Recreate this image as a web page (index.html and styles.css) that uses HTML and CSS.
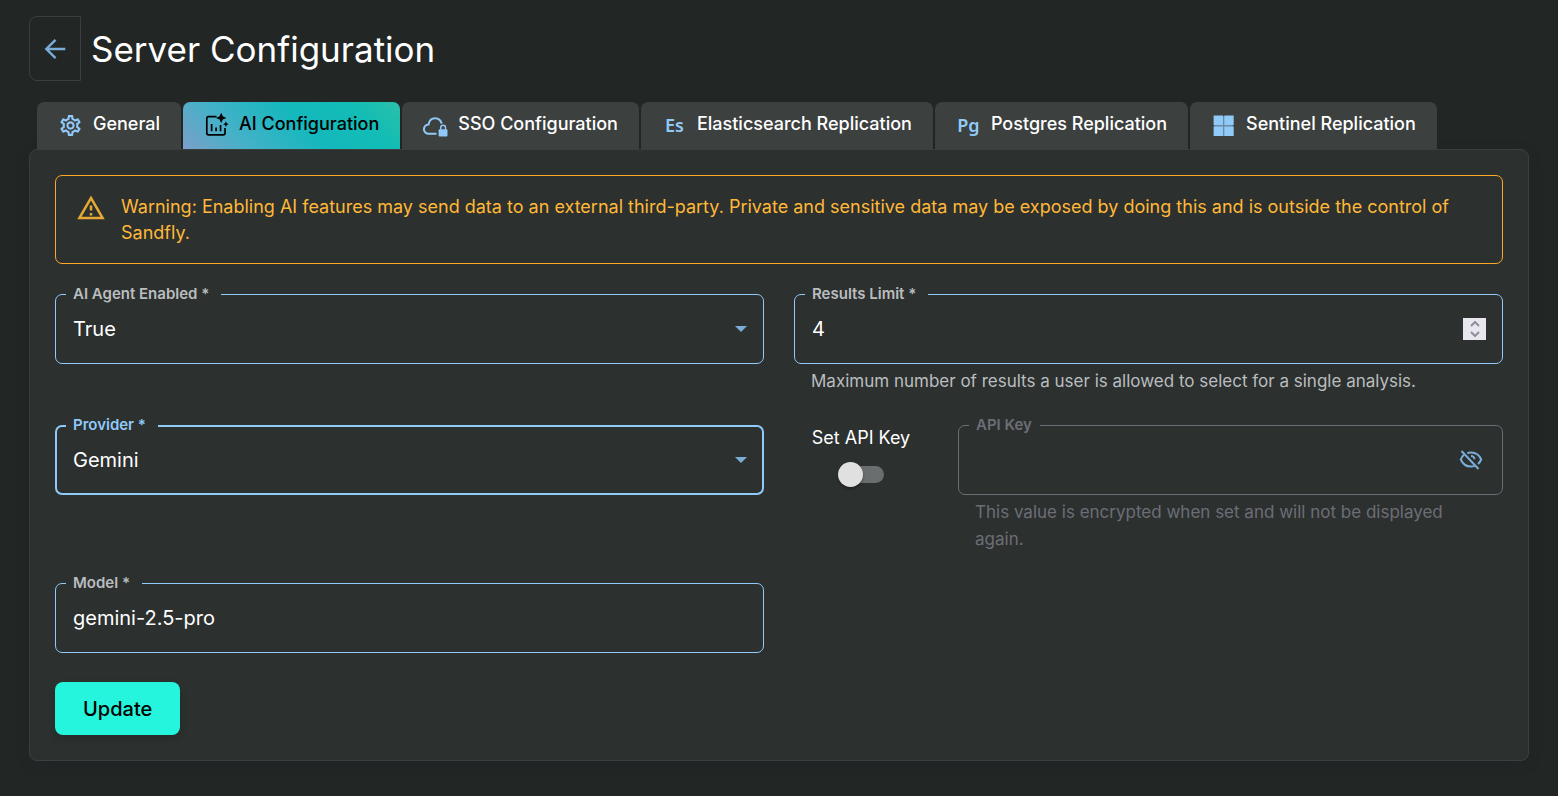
FILE: index.html
```html
<!DOCTYPE html>
<html lang="en">
<head>
<meta charset="utf-8">
<meta name="viewport" content="width=device-width, initial-scale=1">
<title>Server Configuration</title>
<link rel="stylesheet" href="styles.css">
</head>
<body>
<main class="page">
  <header class="page-header">
    <button class="back" type="button" aria-label="Back">
      <svg width="26" height="26" viewBox="0 0 24 24" fill="none" stroke="currentColor" stroke-width="2.2"><path d="M21.500 12H4.500M12.500 3.500L4 12l8.500 8.500"/></svg>
    </button>
    <h1 class="title">Server Configuration</h1>
  </header>

  <nav class="tabs" role="tablist">
    <button class="tab" type="button" role="tab" aria-selected="false">
      <svg class="tab-icon" viewBox="0 0 24 24" fill="currentColor"><path d="M19.43 12.98c.04-.32.07-.64.07-.98s-.03-.66-.07-.98l2.11-1.65c.19-.15.24-.42.12-.64l-2-3.46c-.09-.16-.26-.25-.44-.25-.06 0-.12.01-.17.03l-2.49 1c-.52-.4-1.08-.73-1.69-.98l-.38-2.65C14.46 2.18 14.25 2 14 2h-4c-.25 0-.46.18-.49.42l-.38 2.65c-.61.25-1.17.59-1.69.98l-2.49-1c-.06-.02-.12-.03-.18-.03-.17 0-.34.09-.43.25l-2 3.46c-.13.22-.07.49.12.64l2.11 1.65c-.04.32-.07.65-.07.98s.03.66.07.98l-2.11 1.65c-.19.15-.24.42-.12.64l2 3.46c.09.16.26.25.44.25.06 0 .12-.01.17-.03l2.49-1c.52.4 1.08.73 1.69.98l.38 2.65c.03.24.24.42.49.42h4c.25 0 .46-.18.49-.42l.38-2.65c.61-.25 1.17-.59 1.69-.98l2.49 1c.06.02.12.03.18.03.17 0 .34-.09.43-.25l2-3.46c.12-.22.07-.49-.12-.64l-2.11-1.65zm-1.98-1.71c.04.31.05.52.05.73 0 .21-.02.43-.05.73l-.14 1.13.89.7 1.08.84-.7 1.21-1.27-.51-1.04-.42-.9.68c-.43.32-.84.56-1.25.73l-1.06.43-.16 1.13-.2 1.35h-1.4l-.19-1.35-.16-1.13-1.06-.43c-.43-.18-.83-.41-1.23-.71l-.91-.7-1.06.43-1.27.51-.7-1.21 1.08-.84.89-.7-.14-1.13c-.03-.31-.05-.54-.05-.74s.02-.43.05-.73l.14-1.13-.89-.7-1.08-.84.7-1.21 1.27.51 1.04.42.9-.68c.43-.32.84-.56 1.25-.73l1.06-.43.16-1.13.2-1.35h1.39l.19 1.35.16 1.13 1.06.43c.43.18.83.41 1.23.71l.91.7 1.06-.43 1.27-.51.7 1.21-1.07.85-.89.7.14 1.13zM12 8c-2.21 0-4 1.79-4 4s1.79 4 4 4 4-1.79 4-4-1.79-4-4-4zm0 6c-1.1 0-2-.9-2-2s.9-2 2-2 2 .9 2 2-.9 2-2 2z"/></svg>
      <span class="tab-text">General</span>
    </button>
    <button class="tab tab-active" type="button" role="tab" aria-selected="true">
      <svg class="tab-icon" viewBox="0 0 24 24" fill="none" stroke="currentColor" stroke-width="1.600"><path d="M12 3.500H4.500Q2.700 3.500 2.700 5.300V19.200Q2.700 21 4.500 21H18.400Q20.200 21 20.200 19.200V14.500"/><path d="M7.300 17.500V10.500M11.600 17.500v-3.500M15.900 17.500V11.500"/><path fill="currentColor" stroke="none" d="M16.500-.3l1.500 3.500 3.500 1.500-3.500 1.500-1.500 3.500-1.500-3.500-3.500-1.500 3.500-1.500zM21 8l.8 1.900 1.900.8-1.900.8L21 13.400l-.8-1.900-1.900-.8 1.900-.8z"/></svg>
      <span class="tab-text">AI Configuration</span>
    </button>
    <button class="tab" type="button" role="tab" aria-selected="false">
      <svg class="tab-icon" viewBox="0 0 24 24" fill="none" stroke="currentColor" stroke-width="1.900"><path d="M13 20H5.500A4.500 4.500 0 0 1 5.300 11C6 7 8.500 5 11.700 5c3.300 0 5.500 2.300 6.300 5.200"/><path d="M17 16v-2a2.300 2.300 0 0 1 4.600 0v2" stroke-width="1.400"/><rect x="15" y="15.500" width="8.500" height="7" rx="1" fill="currentColor" stroke="none"/></svg>
      <span class="tab-text">SSO Configuration</span>
    </button>
    <button class="tab" type="button" role="tab" aria-selected="false">
      <span class="tab-icon tab-mark" aria-hidden="true">Es</span>
      <span class="tab-text">Elasticsearch Replication</span>
    </button>
    <button class="tab" type="button" role="tab" aria-selected="false">
      <span class="tab-icon tab-mark" aria-hidden="true">Pg</span>
      <span class="tab-text">Postgres Replication</span>
    </button>
    <button class="tab" type="button" role="tab" aria-selected="false">
      <svg class="tab-icon" viewBox="0 0 24 24" fill="currentColor"><path opacity=".55" d="M3 3h18v19H3z"/><path d="M2.500 2.500h9v9h-9zM12.800 2.500h9v9h-9zM2.500 13h9v9h-9zM12.800 13h9v9h-9z"/></svg>
      <span class="tab-text">Sentinel Replication</span>
    </button>
  </nav>

  <form class="panel">
    <div class="alert" role="alert">
      <svg class="alert-icon" viewBox="0 0 24 24" fill="currentColor"><path d="M12 5.990L19.530 19H4.470L12 5.990M12 2L1 21h22L12 2zm1 14h-2v2h2v-2zm0-6h-2v4h2v-4z"/></svg>
      <p class="alert-text">Warning: Enabling AI features may send data to an external third-party. Private and sensitive data may be exposed by doing this and is outside the control of Sandfly.</p>
    </div>

    <div class="grid">
      <div class="field">
        <label class="label" for="agent">AI Agent Enabled *</label>
        <div class="box">
          <select class="control" id="agent"><option>True</option><option>False</option></select>
          <svg class="arrow" viewBox="0 0 12 6" fill="currentColor"><path d="M0 0h12L6 6z"/></svg>
        </div>
      </div>
      <div class="field">
        <label class="label" for="limit">Results Limit *</label>
        <div class="box">
          <input class="control" id="limit" type="number" value="4" aria-describedby="limit-help">
          <span class="spinner" aria-hidden="true"><svg width="10" height="16" viewBox="0 0 10 16" fill="none" stroke="currentColor" stroke-width="2"><path d="M1 5l4-4 4 4M1 11l4 4 4-4"/></svg></span>
        </div>
        <p class="help" id="limit-help">Maximum number of results a user is allowed to select for a single analysis.</p>
      </div>
      <div class="field field-focus">
        <label class="label" for="provider">Provider *</label>
        <div class="box">
          <select class="control" id="provider"><option>Gemini</option><option>OpenAI</option></select>
          <svg class="arrow" viewBox="0 0 12 6" fill="currentColor"><path d="M0 0h12L6 6z"/></svg>
        </div>
      </div>
      <div class="key-row">
        <div class="toggle">
          <label class="toggle-label" for="set-key">Set API Key</label>
          <input class="switch" id="set-key" type="checkbox" role="switch">
        </div>
        <div class="field field-disabled">
          <label class="label" for="key">API Key</label>
          <div class="box">
            <input class="control" id="key" type="password" disabled aria-describedby="key-help">
            <button class="reveal" type="button" aria-label="Show API key">
              <svg width="24" height="24" viewBox="0 0 24 24" fill="none" stroke="currentColor" stroke-width="2"><path d="M2.500 3l17 18"/><path d="M8.200 5.100C9.300 4.700 10.600 4.500 12 4.500c5 0 8.500 3 10.200 7-.7 1.700-1.800 3.200-3.200 4.400"/><path d="M5 6.700C3.500 7.900 2.500 9.500 1.800 11.500c1.700 4 5.200 7 10.200 7 1.300 0 2.500-.2 3.600-.6"/><path d="M12 8c2 0 3.500 1.500 3.500 3.300"/></svg>
            </button>
          </div>
          <p class="help" id="key-help">This value is encrypted when set and will not be displayed again.</p>
        </div>
      </div>
      <div class="field">
        <label class="label" for="model">Model *</label>
        <div class="box"><input class="control" id="model" type="text" value="gemini-2.5-pro"></div>
      </div>
    </div>

    <button class="update" type="submit">Update</button>
  </form>
</main>
</body>
</html>
```
FILE: styles.css
```css
:root {
  --bg: #222625;
  --panel: #2c302f;
  --line: #3a3e3e;
  --blue: #90caf9;
  --blue-soft: #7aaed9;
  --muted: #babdbf;
  --disabled: #6c6e76;
}

* { box-sizing: border-box; }

body {
  margin: 0;
  min-height: 100vh;
  background: var(--bg);
  color: #fff;
  font-family: Inter, "Liberation Sans", sans-serif;
  font-size: 18px;
}

button, input, select { font: inherit; color: inherit; }
button { cursor: pointer; }
h1, p { margin: 0; }

.page { padding: 16px 29px 35px; }

.page-header {
  display: flex;
  align-items: center;
  gap: 10px;
}

.back {
  display: flex;
  align-items: center;
  justify-content: center;
  width: 52px;
  height: 65px;
  padding: 0;
  border: 1px solid var(--line);
  border-radius: 8px 0 0 8px;
  background: none;
  color: var(--blue-soft);
}

.title {
  font-size: 35px;
  font-weight: 400;
  line-height: 44px;
}

.tabs {
  display: flex;
  gap: 2px;
  padding: 21px 8px 0;
}

.tab {
  display: flex;
  align-items: center;
  gap: 10px;
  height: 47px;
  padding: 0 21px;
  border: 0;
  border-radius: 7px 7px 0 0;
  background: #3c403f;
  font-weight: 500;
  line-height: 24px;
  white-space: nowrap;
}

.tab-text { padding-bottom: 4px; }

.tab-icon {
  flex: none;
  width: 25px;
  height: 25px;
  color: var(--blue);
}

.tab-mark {
  font-family: "Noto Sans", sans-serif;
  font-weight: 600;
  text-align: center;
}

.tab-active {
  background: linear-gradient(45deg, #7b9fc8 0%, #45b1c8 25%, #14b8bd 55%, #12bdb5 80%, #2bbfa9 100%);
  color: #000;
}

.tab-active .tab-icon { color: #000; }

.panel {
  padding: 25px;
  border: 1px solid var(--line);
  border-radius: 8px;
  background: var(--panel);
  box-shadow: 0 3px 12px rgba(30, 34, 40, .4);
}

.alert {
  display: flex;
  gap: 15px;
  padding: 17px 20px;
  border: 1px solid #ffa726;
  border-radius: 7px;
  color: #ffb838;
}

.alert-icon {
  flex: none;
  width: 30px;
  height: 30px;
  color: #e6a935;
}

.alert-text {
  padding-top: 1px;
  line-height: 26px;
}

.grid {
  display: grid;
  grid-template-columns: 1fr 1fr;
  gap: 30px;
  margin: 30px 0 29px;
}

.field {
  position: relative;
  flex: 1;
  min-width: 0;
}

.label {
  position: absolute;
  top: -9px;
  left: 11px;
  padding: 0 12px 0 7px;
  background: var(--panel);
  color: var(--muted);
  font-size: 15px;
  font-weight: 600;
  line-height: 18px;
}

.box {
  display: flex;
  align-items: center;
  height: 70px;
  padding: 0 16px 0 17px;
  border: 1px solid var(--blue);
  border-radius: 7px;
}

.control {
  flex: 1;
  min-width: 0;
  height: 100%;
  padding: 0;
  border: 0;
  outline: 0;
  background: none;
  appearance: none;
  font-size: 20px;
}

.control option { background: var(--panel); }
.control[type="number"] { appearance: textfield; }

.arrow {
  width: 12px;
  height: 6px;
  color: var(--blue-soft);
  pointer-events: none;
}

.spinner {
  display: flex;
  align-items: center;
  justify-content: center;
  width: 23px;
  height: 22px;
  background: #e9e7ee;
  color: #8e8d99;
}

.help {
  padding: 4px 17px 0;
  color: var(--muted);
  font-size: 17px;
  line-height: 27px;
}

.field-focus .box {
  padding: 0 15px 0 16px;
  border-width: 2px;
}

.field-focus .label { color: var(--blue); }

.field-disabled .label, .field-disabled .help { color: var(--disabled); }
.field-disabled .box { border-color: var(--disabled); }
.field-disabled .label { padding-right: 8px; }

.key-row {
  display: flex;
  gap: 30px;
}

.toggle {
  display: flex;
  flex-direction: column;
  align-items: center;
  gap: 11px;
  width: 134px;
}

.toggle-label { line-height: 26px; }

.switch {
  position: relative;
  width: 46px;
  height: 25px;
  margin: 0;
  appearance: none;
  cursor: pointer;
}

.switch::before {
  content: "";
  position: absolute;
  inset: 4px 0 4px 5px;
  border-radius: 9px;
  background: #6b6e6e;
}

.switch::after {
  content: "";
  position: absolute;
  top: 0;
  left: 0;
  width: 25px;
  height: 25px;
  border-radius: 50%;
  background: #e0e0e0;
  box-shadow: 0 2px 3px rgba(0, 0, 0, .3);
}

.switch:checked::after { left: 21px; }

.reveal {
  display: flex;
  padding: 3px;
  border: 0;
  background: none;
  color: var(--blue-soft);
}

.update {
  display: block;
  height: 53px;
  padding: 0 28px;
  border: 0;
  border-radius: 8px;
  background: #24f5dc;
  box-shadow: 0 3px 8px rgba(0, 0, 0, .15);
  color: #000;
  font-size: 20px;
  font-weight: 500;
}
```
